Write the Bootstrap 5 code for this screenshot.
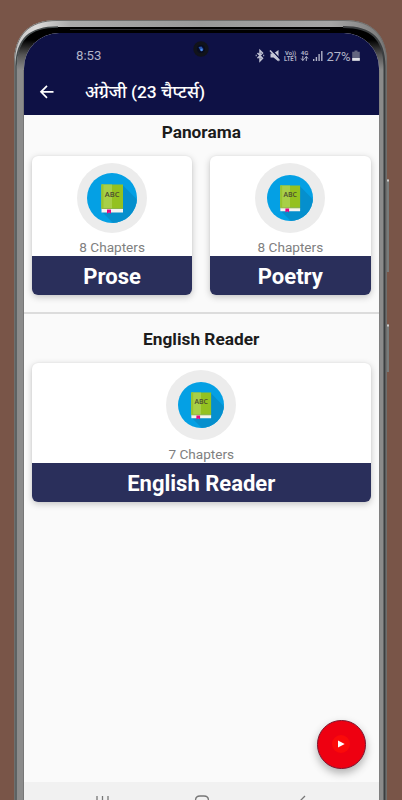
<!DOCTYPE html>
<html lang="hi">
<head>
<meta charset="utf-8">
<meta name="viewport" content="width=device-width, initial-scale=1">
<title>अंग्रेजी</title>
<link href="https://cdn.jsdelivr.net/npm/bootstrap@5.3.0/dist/css/bootstrap.min.css" rel="stylesheet">
<style>
body{background:#795548;font-family:Roboto,"Noto Sans",sans-serif;height:800px;color:#1c1c1c}
.stage{width:402px;height:800px;padding:33px 23.5px 0 24px}
.frame{left:0;top:0;width:402px;height:800px}
.screen{background:#fafafa;border-radius:35px 35px 0 0;height:767px}
.topbar{background:#0e1145;height:82px;flex:none}
.status{height:45px;padding:0 18px 0 52px;color:#b2b4c8}
.clock{font-size:13.2px;line-height:45px}
.lens{left:193px;top:41px;width:16px;height:16px}
.appbar{padding-left:14px;height:27px;color:#fff}
.apptitle{font-size:17.4px;font-weight:500;margin-left:29px;line-height:27px;padding-top:1px}
.sect{font-size:17.3px;font-weight:700;line-height:22px}
.chapters-top{padding-top:6px}
.tiles{gap:18px;margin-top:13px;margin-bottom:17px}
.reader{padding-top:14px}
.reader .tile{margin-top:13px}
.tile{border:0;border-radius:6px;height:139px;overflow:hidden;box-shadow:0 2px 7px rgba(0,0,0,.22),0 0 2px rgba(0,0,0,.06)}
.ring{width:70px;height:70px;background:#ececec;margin-top:7px;flex:none}
.count{font-size:13.6px;line-height:18px;color:#808080;margin-top:5px}
.label{background:#2a2f5b;color:#fff;height:39.5px;font-size:22px;font-weight:700;line-height:42px}
.rule{height:2px;background:#dcdcdc}
.fab{left:317px;top:720px;width:48.5px;height:48.5px;background:#ee0011;border:1px solid #7d1630;box-shadow:0 4px 8px rgba(0,0,0,.3)}
.fabdot{width:18px;height:18px;background:#fa0a0a}
.sysnav{height:18px;background:#f1f1f1;flex:none}
</style>
<script src="https://cdn.jsdelivr.net/npm/bootstrap@5.3.0/dist/js/bootstrap.bundle.min.js"></script>
</head>
<body class="m-0 overflow-hidden">
<main class="stage position-relative">
  <svg class="frame position-absolute" viewBox="0 0 402 800" aria-hidden="true">
    <defs>
      <linearGradient id="metal" x1="0" x2="1" y1="0" y2="0"><stop offset="0" stop-color="#c5c5c5"/><stop offset=".06" stop-color="#dadada"/><stop offset=".15" stop-color="#aaa"/><stop offset=".5" stop-color="#999"/><stop offset=".85" stop-color="#a5a5a5"/><stop offset="1" stop-color="#777"/></linearGradient>
      <linearGradient id="top" x1="0" x2="0" y1="20" y2="70" gradientUnits="userSpaceOnUse"><stop offset="0" stop-color="#000"/><stop offset=".4" stop-color="#000"/><stop offset=".7" stop-color="#555"/><stop offset="1" stop-color="#8b8b8b"/></linearGradient>
      <clipPath id="disc"><circle cx="25" cy="25" r="25"/></clipPath>
    </defs>
    <path d="M386 179.500h3V272h-3zM386 324.500h3V372h-3z" fill="#777b7b"/><path d="M386 179.500h3v2h-3zM386 324.500h3v2h-3z" fill="#ccc"/>
    <path d="M14 810V63C14 35 29 20 57 20H344C372 20 387 35 387 63V810Z" fill="url(#metal)"/>
    <path d="M14.500 810V63C14.500 35 29 20.500 57 20.500H344C372 20.500 386.500 35 386.500 63V810" fill="none" stroke="#6f6e6c" stroke-width="1"/>
    <path d="M17 810V66C17 39 30 27 58 27H343C371 27 384 39 384 66V810Z" fill="url(#top)"/>
    <path d="M16 810V66C17 39 29 27 58 27" fill="none" stroke="#444a4b" stroke-width="1.600"/>
    <path d="M343 27C372 27 384 39 384.500 66V810" fill="none" stroke="#3b3e40" stroke-width="2"/>
    <path d="M23.500 70V810M379 70V810" stroke="#777" stroke-width="1" fill="none"/>
    <path d="M70 29.500H330" stroke="#303033" stroke-width="1"/>
  </svg>
  <div class="screen position-relative overflow-hidden d-flex flex-column">
    <header class="topbar">
      <div class="status d-flex align-items-center justify-content-between">
        <span class="clock">8:53</span>
        <svg width="107" height="18" viewBox="254 47 107 18" fill="#b2b4c8" font-family="Roboto">
          <path d="m257.500 53 5 5.200-2.500 2.600V50.500l2.500 2.500-5 5.200M255.700 55.600h1m6.500 0h1" fill="none" stroke="#c0c2d2" stroke-width="1.500"/>
          <path d="M270.500 53.500h3l5-3.500v11.500l-5-4h-3z" fill="#c6c8d6"/><path d="m271 49.500 9.500 10" stroke="#0e1145" stroke-width="1.400"/><path d="m270 50.500 9.500 10" stroke="#c6c8d6" stroke-width="1.500"/>
          <text x="290.600" y="55" font-size="6" font-weight="700" text-anchor="middle" textLength="11" lengthAdjust="spacingAndGlyphs">Vo))</text>
          <text x="290.600" y="61" font-size="6.500" font-weight="700" text-anchor="middle" textLength="13" lengthAdjust="spacingAndGlyphs">LTE1</text>
          <text x="304.600" y="55" font-size="6" font-weight="700" text-anchor="middle">4G</text>
          <path d="M302.800 56v4.500m-1.700-2 1.700 2 1.700-2M306.300 61v-4.500m-1.700 2 1.700-2 1.700 2" fill="none" stroke="#b2b4c8"/>
          <path d="M313 59h1.400v2H313zM315.700 57h1.400v4h-1.400zM318.400 54h1.400v7h-1.400zM321.100 51h1.400v10h-1.400z"/>
          <text x="326.500" y="60.800" font-size="13" textLength="24">27%</text>
          <path d="M354.500 50.500h3v1.300h2.300v9h-7.600v-9h2.300z" fill="#63657f"/><path d="M352.200 58h7.600v2.800h-7.600z" fill="#e0e1e8"/>
        </svg>
      </div>
      <div class="appbar d-flex align-items-center">
        <svg width="18" height="18" viewBox="0 0 18 18" fill="none" stroke="#fff" stroke-width="1.700"><path d="M15.500 8.800H3M9 2.800l-6 6 6 6"/></svg>
        <span class="apptitle text-nowrap">अंग्रेजी (23 चैप्टर्स)</span>
      </div>
    </header>
    <section class="px-2 chapters-top">
      <h2 class="sect text-center m-0">Panorama</h2>
      <div class="d-flex tiles">
        <article class="card tile w-50 align-items-center">
          <div class="ring rounded-circle d-flex align-items-center justify-content-center">
            <svg width="50" height="50" viewBox="0 0 50 50"><g id="book">
              <circle cx="25" cy="25" r="25" fill="#04a0e4"/>
              <path clip-path="url(#disc)" d="M35.500 12 60 36.500V60H36L14.500 38.500Z" fill="#058fcd"/>
              <path d="M14.500 11.500h21.500v24h-21.500z" fill="#94c120"/>
              <path d="M14.500 11.500h10.500v24H14.500z" fill="#a8cf48"/>
              <path d="M14.500 11.500h2v24h-2z" fill="#9ac52d"/>
              <path d="M14.500 35.500h21.500v4h-21.500z" fill="#f4f4ef"/>
              <path d="M14.500 35.300h21.500v.8h-21.500z" fill="#84aa26"/>
              <path d="M20 36.500h4v4.300l-2-1.300-2 1.300z" fill="#e5097f"/>
              <text x="25.200" y="23.500" text-anchor="middle" font-family="Open Sans" font-weight="600" font-size="7.500" fill="#4c4c30">ABC</text>
            </g></svg>
          </div>
          <div class="count">8 Chapters</div><div class="label w-100 mt-auto text-center">Prose</div>
        </article>
        <article class="card tile w-50 align-items-center">
          <div class="ring rounded-circle d-flex align-items-center justify-content-center"><svg width="46" height="46" viewBox="0 0 50 50"><use href="#book"/></svg></div>
          <div class="count">8 Chapters</div><div class="label w-100 mt-auto text-center">Poetry</div>
        </article>
      </div>
    </section>
    <div class="rule flex-shrink-0"></div>
    <section class="px-2 reader">
      <h2 class="sect text-center m-0">English Reader</h2>
      <article class="card tile align-items-center">
        <div class="ring rounded-circle d-flex align-items-center justify-content-center"><svg width="46" height="46" viewBox="0 0 50 50"><use href="#book"/></svg></div>
        <div class="count">7 Chapters</div><div class="label w-100 mt-auto text-center">English Reader</div>
      </article>
    </section>
    <nav class="sysnav mt-auto">
      <svg class="d-block" width="354" height="18" viewBox="24 782 354 18" fill="none" stroke="#777" stroke-width="1.300"><path d="M97 796v6M102.500 796v6M108 796v6M195.500 802v-1.500q0-4.500 4.500-4.500h4q4.500 0 4.500 4.500v1.500M305 796l-6 6"/></svg>
    </nav>
  </div>
  <svg class="lens position-absolute" viewBox="0 0 16 16"><circle cx="8" cy="8" r="7.700" fill="#11131a"/><circle cx="8" cy="8" r="4" fill="#070b20"/><path d="m5.500 6 3-.5L10.500 8 9.500 10 7 9z" fill="#2753ac"/><circle cx="8.500" cy="9" r="1.200" fill="#4e8ce8"/></svg>
  <button class="fab position-absolute rounded-circle p-0 d-flex align-items-center justify-content-center" aria-label="Play"><span class="fabdot rounded-circle d-flex align-items-center justify-content-center"><svg width="8" height="8" viewBox="0 0 8 8"><path d="M1 0.500 7.700 4 1 7.500z" fill="#fff"/></svg></span></button>
</main>
</body>
</html>
